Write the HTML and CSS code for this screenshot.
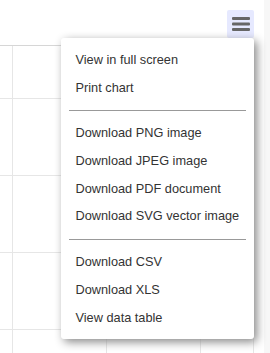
FILE: index.html
```html
<!DOCTYPE html>
<html>
<head>
<meta charset="utf-8">
<link rel="stylesheet" href="styles.css">
</head>
<body>
<div class="page">
  <div class="chart">
    <svg class="grid" width="264" height="353" viewBox="0 0 264 353">
      <g stroke="#e6e6e6" stroke-width="1" shape-rendering="crispEdges">
        <line x1="0" y1="98.5" x2="254" y2="98.5"/>
        <line x1="0" y1="175.5" x2="254" y2="175.5"/>
        <line x1="0" y1="252.5" x2="254" y2="252.5"/>
        <line x1="0" y1="329.5" x2="254" y2="329.5"/>
        <line x1="12.5" y1="45" x2="12.5" y2="353"/>
        <line x1="106.5" y1="45" x2="106.5" y2="353"/>
        <line x1="200.5" y1="45" x2="200.5" y2="353"/>
        <line x1="253.5" y1="45" x2="253.5" y2="353"/>
      </g>
      <line x1="0" y1="45.5" x2="254" y2="45.5" stroke="#d6d6d6" stroke-width="1" shape-rendering="crispEdges"/>
    </svg>
    <div class="menu-button">
      <svg width="27" height="28" viewBox="0 0 27 28">
        <g fill="#666">
          <rect x="5" y="7" width="18" height="3" rx="1"/>
          <rect x="5" y="12.5" width="18" height="3" rx="1"/>
          <rect x="5" y="18" width="18" height="3" rx="1"/>
        </g>
      </svg>
    </div>
    <ul class="menu">
      <li class="item">View in full screen</li>
      <li class="item">Print chart</li>
      <li class="sep"></li>
      <li class="item">Download PNG image</li>
      <li class="item">Download JPEG image</li>
      <li class="item">Download PDF document</li>
      <li class="item">Download SVG vector image</li>
      <li class="sep"></li>
      <li class="item">Download CSV</li>
      <li class="item">Download XLS</li>
      <li class="item">View data table</li>
    </ul>
  </div>
  <div class="strip"></div>
</div>
</body>
</html>
```
FILE: styles.css
```css
html, body {
  margin: 0;
  padding: 0;
  background: #ffffff;
}
.page {
  display: flex;
  width: 270px;
  height: 353px;
  overflow: hidden;
}
.chart {
  position: relative;
  width: 264px;
  height: 353px;
  background: #ffffff;
  flex: none;
}
.strip {
  flex: 1;
  background: #f7f7f7;
}
.grid {
  display: block;
}
.menu-button {
  position: absolute;
  left: 227px;
  top: 10px;
  width: 27px;
  height: 28px;
  background: #e6e9ff;
  border-radius: 2px;
}
.menu-button svg {
  display: block;
}
.menu {
  position: absolute;
  left: 61px;
  top: 38px;
  width: 193px;
  margin: 0;
  padding: 8px 0 7.5px;
  list-style: none;
  background: #ffffff;
  border-radius: 3px;
  box-shadow: 3px 3px 10px #888888;
  font-family: "Liberation Sans", Arial, sans-serif;
  font-size: 12.75px;
  color: #333333;
}
.item {
  height: 27.7px;
  line-height: 27.7px;
  padding: 0 14.5px;
  white-space: nowrap;
}
.sep {
  height: 1px;
  margin: 8.5px 8px;
  background: #999999;
}
```
